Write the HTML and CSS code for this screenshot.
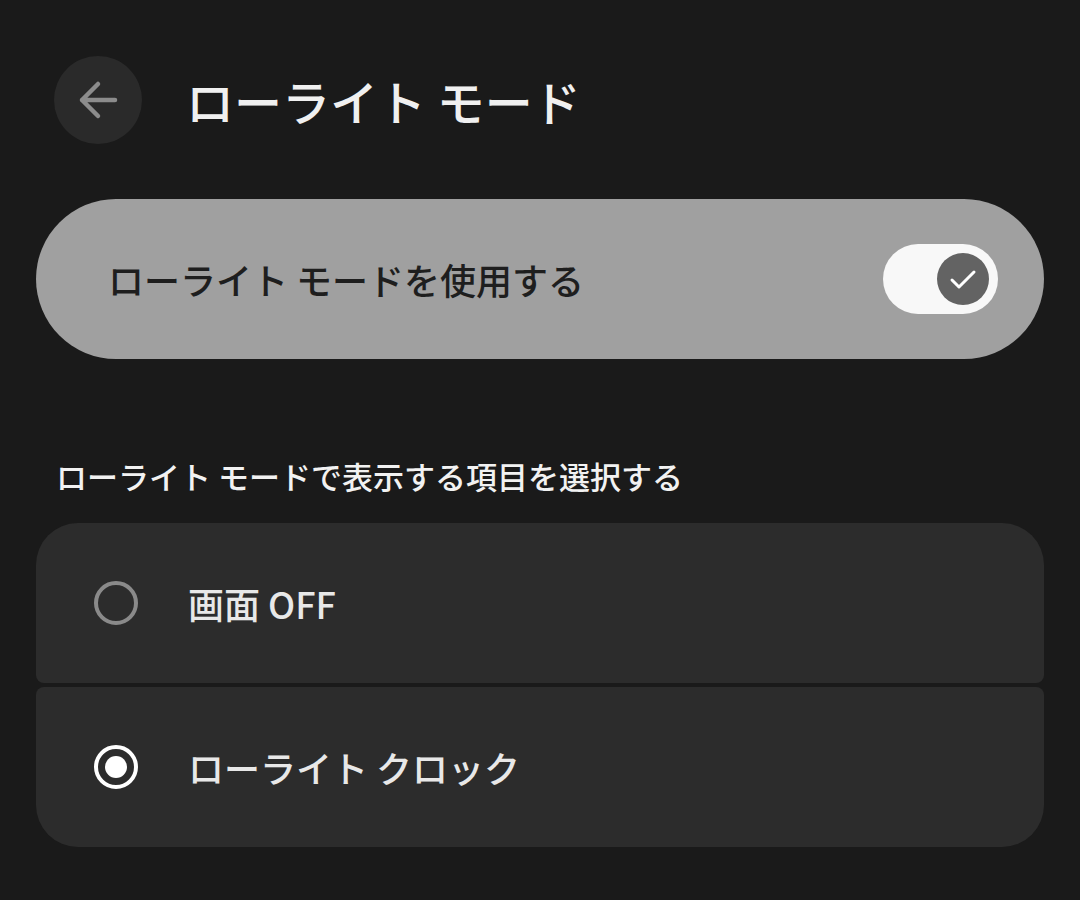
FILE: index.html
```html
<!DOCTYPE html>
<html lang="ja">
<head>
<meta charset="utf-8">
<link rel="stylesheet" href="styles.css">
</head>
<body>
<div class="page">
  <header class="header">
    <div class="back">
      <svg width="88" height="88" viewBox="0 0 88 88">
        <path d="M61 44 H28 M44 28 L28 44 L44 60" fill="none" stroke="#8c8c8c" stroke-width="4.5" stroke-linecap="round" stroke-linejoin="round"/>
      </svg>
    </div>
    <h1 class="title">ローライト モード</h1>
  </header>

  <div class="main-toggle">
    <span class="main-label">ローライト モードを使用する</span>
    <div class="switch">
      <div class="thumb">
        <svg width="52" height="52" viewBox="0 0 52 52">
          <path d="M15 27 L22 34 L37 19" fill="none" stroke="#ffffff" stroke-width="3" stroke-linecap="round" stroke-linejoin="round"/>
        </svg>
      </div>
    </div>
  </div>

  <div class="section-title">ローライト モードで表示する項目を選択する</div>

  <div class="list">
    <div class="item item-first">
      <span class="radio"></span>
      <span class="item-label">画面 OFF</span>
    </div>
    <div class="item item-last">
      <span class="radio radio-on"><span class="dot"></span></span>
      <span class="item-label">ローライト クロック</span>
    </div>
  </div>
</div>
</body>
</html>
```
FILE: styles.css
```css
html, body {
  margin: 0;
  padding: 0;
  background: #1a1a1a;
}
body {
  font-family: "Noto Sans CJK JP", "Noto Sans", sans-serif;
  width: 1080px;
  height: 900px;
  overflow: hidden;
}
.page {
  padding: 56px 36px 0 36px;
}
.header {
  display: flex;
  align-items: center;
  padding-left: 18px;
  gap: 44px;
  height: 88px;
}
.back {
  width: 88px;
  height: 88px;
  border-radius: 50%;
  background: #2a2a2a;
  flex: none;
}
.back svg { display: block; }
.title {
  margin: 0;
  font-size: 48px;
  font-weight: 500;
  color: #f0f0f0;
  line-height: 1;
}
.main-toggle {
  margin-top: 55px;
  height: 160px;
  border-radius: 80px;
  background: #a0a0a0;
  display: flex;
  align-items: center;
  justify-content: space-between;
  padding: 0 46px 0 72px;
  box-sizing: border-box;
}
.main-label {
  font-size: 36px;
  font-weight: 500;
  color: #1e1e1e;
}
.switch {
  width: 115px;
  height: 70px;
  border-radius: 35px;
  background: #f8f8f8;
  display: flex;
  align-items: center;
  justify-content: flex-end;
  padding-right: 9px;
  box-sizing: border-box;
}
.thumb {
  width: 52px;
  height: 52px;
  border-radius: 50%;
  background: #636363;
}
.thumb svg { display: block; }
.section-title {
  margin-top: 97px;
  padding-left: 20px;
  font-size: 31px;
  font-weight: 500;
  line-height: 40px;
  color: #f2f2f2;
}
.list {
  margin-top: 27px;
  display: flex;
  flex-direction: column;
  gap: 4px;
}
.item {
  height: 160px;
  background: #2c2c2c;
  display: flex;
  align-items: center;
  padding-left: 58px;
  gap: 50px;
  box-sizing: border-box;
}
.item-first {
  border-radius: 42px 42px 8px 8px;
}
.item-last {
  border-radius: 8px 8px 42px 42px;
}
.radio {
  width: 44px;
  height: 44px;
  box-sizing: border-box;
  border: 4px solid #8a8a8a;
  border-radius: 50%;
  flex: none;
  display: flex;
  align-items: center;
  justify-content: center;
}
.radio-on {
  border-color: #ffffff;
}
.dot {
  width: 22px;
  height: 22px;
  border-radius: 50%;
  background: #ffffff;
}
.item-label {
  font-size: 36px;
  font-weight: 500;
  color: #e8e8e8;
}
```
